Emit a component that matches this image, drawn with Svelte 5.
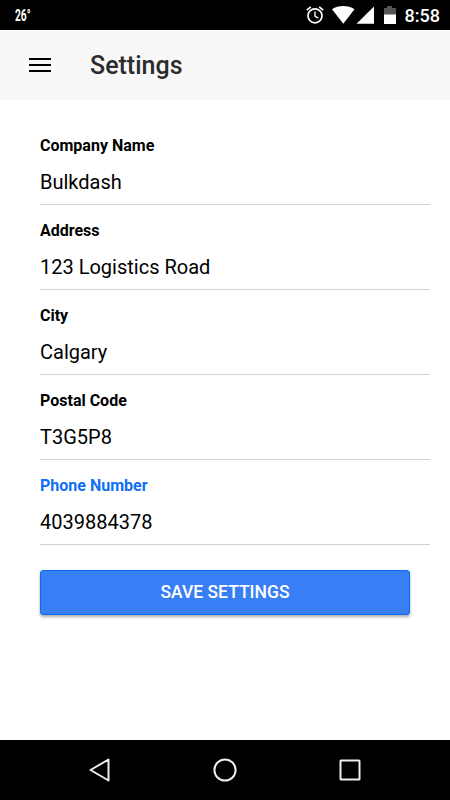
<script lang="ts">
  type Field = { id: string; label: string; type: string };

  const fields: Field[] = [
    { id: "company", label: "Company Name", type: "text" },
    { id: "address", label: "Address", type: "text" },
    { id: "city", label: "City", type: "text" },
    { id: "postal", label: "Postal Code", type: "text" },
    { id: "phone", label: "Phone Number", type: "tel" }
  ];

  let settings: Record<string, string> = $state({
    company: "Bulkdash",
    address: "123 Logistics Road",
    city: "Calgary",
    postal: "T3G5P8",
    phone: "4039884378"
  });

  // The last field that had focus keeps its label highlighted.
  let active = $state("phone");

  function save(e: SubmitEvent) {
    e.preventDefault();
  }
</script>

<div class="screen">
  <div class="status">
    <span class="temp">26°</span>
    <svg class="icons" width="92" height="18" viewBox="0 0 92 18" aria-hidden="true">
      <g fill="none" stroke="#fff" stroke-width="1.7">
        <circle cx="9" cy="9.8" r="7" />
        <path d="M9 5.5v4.6l3.2 2" stroke-width="1.4" />
        <path d="M.8 4.2 4.8.8M13.2.8l4 3.4" />
      </g>
      <path d="M26 3.3C32.5-1 42-1 48.500 3.300L37.300 17.800z" fill="#fff" />
      <path d="M68 .5v17.300H50.500z" fill="#fff" />
      <path d="M81 0h5v2h4v7H78V2h3z" fill="#555" />
      <path d="M78 8.500h12V18H78z" fill="#fff" />
    </svg>
    <span class="clock">8:58</span>
  </div>

  <header>
    <button type="button" class="menu" aria-label="Menu">
      <svg width="24" height="16" viewBox="0 0 24 16" aria-hidden="true">
        <path d="M1 2h22M1 8h22M1 14h22" stroke="#000" stroke-width="2" />
      </svg>
    </button>
    <h1>Settings</h1>
  </header>

  <main>
    <form onsubmit={save}>
      {#each fields as field (field.id)}
        <div class="field" class:active={active === field.id}>
          <label for={field.id}>{field.label}</label>
          <input
            id={field.id}
            type={field.type}
            bind:value={settings[field.id]}
            onfocus={() => (active = field.id)}
          />
        </div>
      {/each}
      <button type="submit" class="save">Save Settings</button>
    </form>
  </main>

  <nav>
    <button type="button" aria-label="Back">
      <svg width="26" height="26" viewBox="0 0 26 26" aria-hidden="true">
        <path d="M21.5 2.500v21L3.500 13z" />
      </svg>
    </button>
    <button type="button" aria-label="Home">
      <svg width="26" height="26" viewBox="0 0 26 26" aria-hidden="true">
        <circle cx="13" cy="13" r="10.6" />
      </svg>
    </button>
    <button type="button" aria-label="Recent apps">
      <svg width="26" height="26" viewBox="0 0 26 26" aria-hidden="true">
        <rect x="3.5" y="3.5" width="19" height="19" rx=".6" />
      </svg>
    </button>
  </nav>
</div>

<style>
  :global(body) { margin: 0; background: #fff; }
  .screen {
    display: flex;
    flex-direction: column;
    height: 100vh;
    background: #fff;
    color: #000;
    font-family: Roboto, "Noto Sans", sans-serif;
  }
  button {
    border: none;
    background: none;
    padding: 0;
    font-family: inherit;
  }
  svg { display: block; }

  .status {
    display: flex;
    align-items: center;
    height: 30px;
    box-sizing: border-box;
    padding: 0 10px 0 15px;
    background: #000;
    color: #fff;
  }
  /* Condensed readout, narrower than the clock. */
  .temp {
    margin-right: auto;
    font-size: 17px;
    font-weight: 700;
    transform: scaleX(.6);
    transform-origin: left;
  }
  .icons { margin-right: 7px; }
  .clock {
    padding-top: 2px;
    font-size: 18px;
    font-weight: 500;
    line-height: 28px;
  }

  header {
    display: flex;
    align-items: center;
    height: 70px;
    background: #f8f8f8;
  }
  .menu { margin-left: 28px; }
  h1 {
    margin: 0 0 0 38px;
    padding-top: 2px;
    font-size: 25px;
    font-weight: 500;
    line-height: 30px;
    color: #2c2c2c;
  }

  main { flex: 1; }
  form { padding: 20px 20px 0 40px; }
  .field {
    height: 85px;
    box-sizing: border-box;
    padding-top: 16px;
    border-bottom: 1px solid #d2d2d2;
  }
  label {
    display: block;
    font-size: 16px;
    font-weight: 700;
    line-height: 20px;
  }
  .active label { color: #0f6ff5; }
  input {
    display: block;
    width: 100%;
    height: 24px;
    margin-top: 14px;
    padding: 0;
    border: none;
    outline: none;
    background: none;
    color: #000;
    font: 400 20px/24px Roboto, "Noto Sans", sans-serif;
  }
  .save {
    display: block;
    width: 370px;
    height: 45px;
    margin-top: 25px;
    padding-bottom: 2px;
    border: 1px solid #0a6af2;
    border-radius: 3px;
    background: #387ef5;
    box-shadow: 0 2px 3px rgba(0, 0, 0, .32);
    color: #fff;
    font-size: 17.5px;
    font-weight: 500;
    text-transform: uppercase;
  }

  nav {
    display: flex;
    justify-content: center;
    align-items: center;
    gap: 99px;
    height: 60px;
    background: #000;
  }
  nav svg {
    fill: none;
    stroke: #eee;
    stroke-width: 2;
    stroke-linejoin: round;
  }
</style>
